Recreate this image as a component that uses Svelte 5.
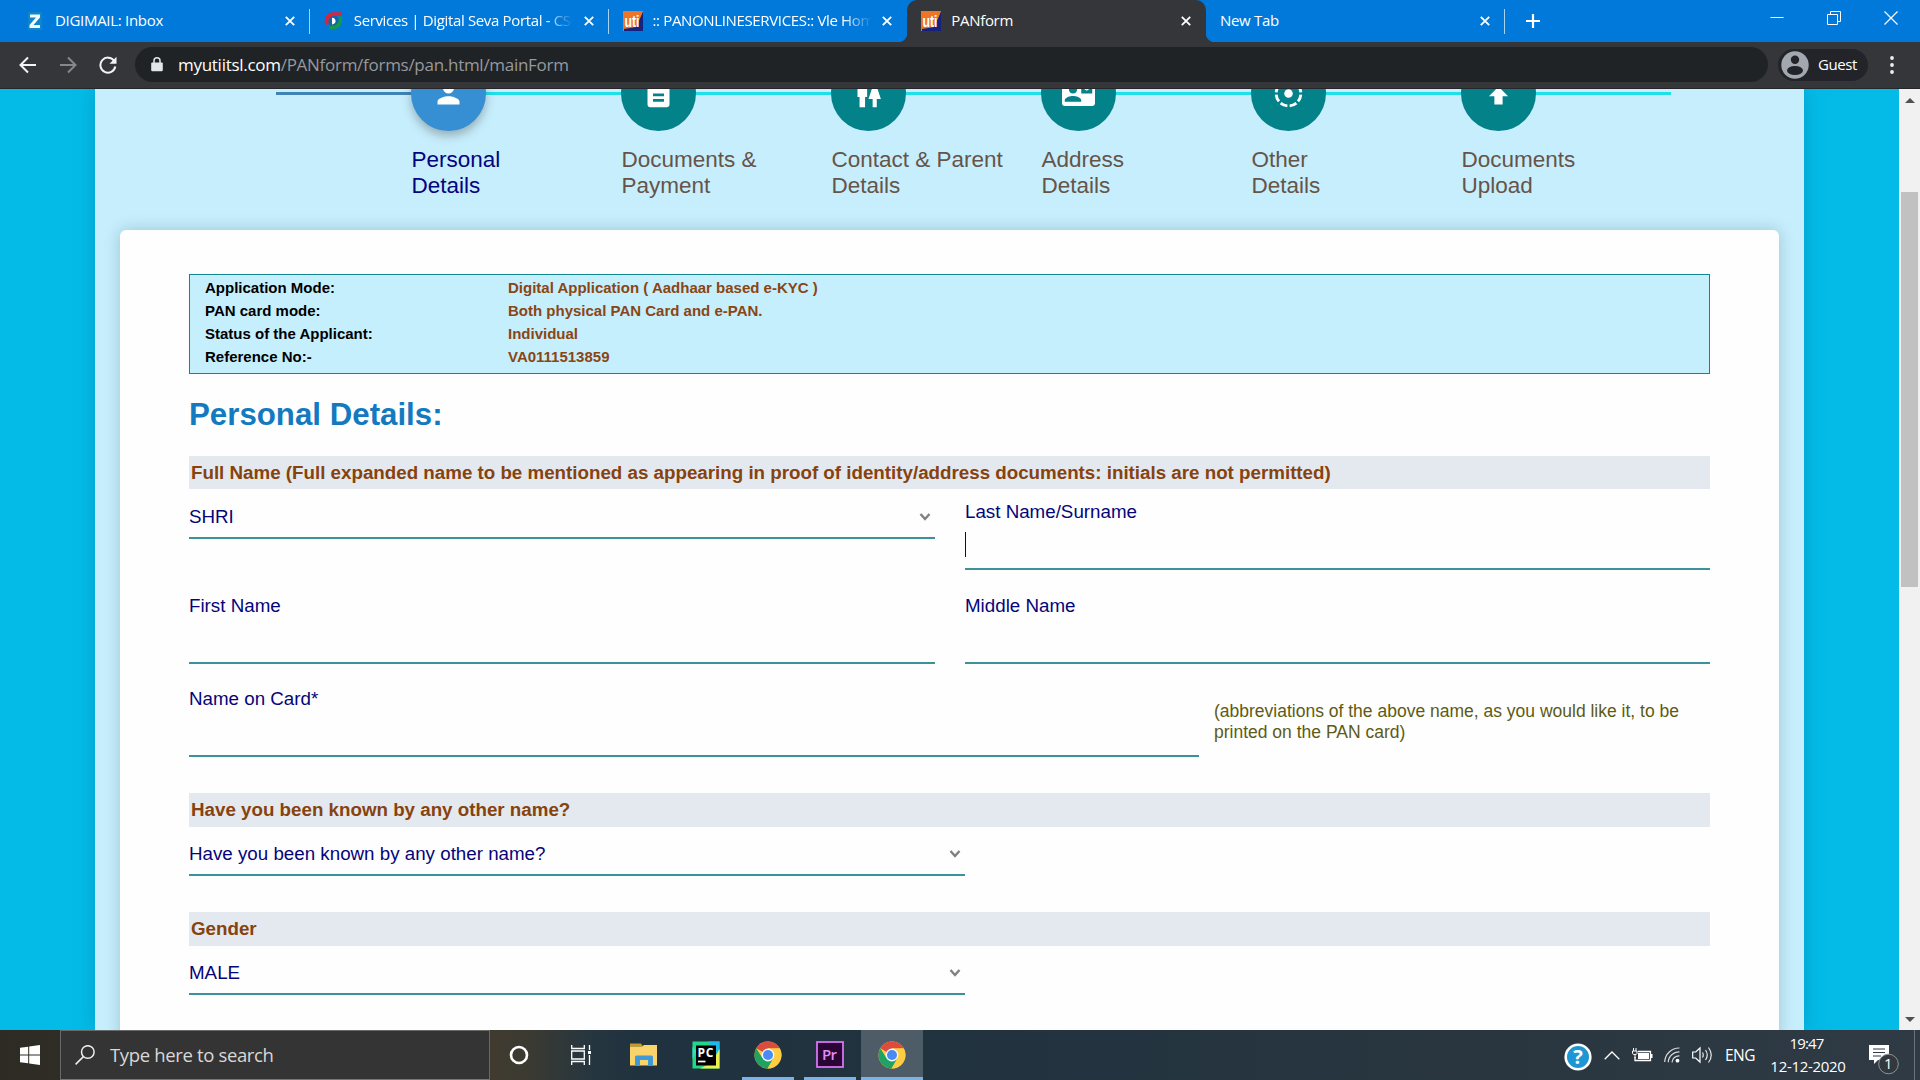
<script>
  const tabs = [
    { title: 'DIGIMAIL: Inbox', icon: 'z' },
    { title: 'Services | Digital Seva Portal - CSC', icon: 'd', fade: true, tight: true },
    { title: ':: PANONLINESERVICES:: Vle Home', icon: 'uti', fade: true, tight: true },
    { title: 'PANform', icon: 'uti', active: true },
    { title: 'New Tab', icon: null }
  ];
  const steps = [
    { lines: ['Personal', 'Details'], icon: 'person', active: true },
    { lines: ['Documents &', 'Payment'], icon: 'doc' },
    { lines: ['Contact & Parent', 'Details'], icon: 'wc' },
    { lines: ['Address', 'Details'], icon: 'mail' },
    { lines: ['Other', 'Details'], icon: 'ring' },
    { lines: ['Documents', 'Upload'], icon: 'publish' }
  ];
  const info = [
    ['Application Mode:', 'Digital Application ( Aadhaar based e-KYC )'],
    ['PAN card mode:', 'Both physical PAN Card and e-PAN.'],
    ['Status of the Applicant:', 'Individual'],
    ['Reference No:-', 'VA0111513859']
  ];
</script>

{#snippet chevron()}
  <svg class="chev" width="12" height="9" viewBox="0 0 12 9"><path d="M1.5 1 6 6l4.500-5" fill="none" stroke="#808080" stroke-width="2.400" /></svg>
{/snippet}

{#snippet select(text)}
  <div class="select"><span>{text}</span>{@render chevron()}</div>
{/snippet}

{#snippet chrome()}
  <svg width="28" height="28" viewBox="0 0 28 28">
    <circle cx="14" cy="14" r="13.500" fill="#ffcd41" />
    <path d="M14 14 2.300 7.250A13.500 13.500 0 0 1 25.700 7.250H14z" fill="#dd4b3e" />
    <path d="M2.300 7.250A13.500 13.500 0 0 0 13.600 27.500L19.500 17.200 14 14 8.500 17.200z" fill="#1ea362" />
    <path d="M14 7.700H25.900A13.500 13.500 0 0 1 13.600 27.500L19.500 17.200z" fill="#ffcd41" />
    <circle cx="14" cy="14" r="6.400" fill="#f4f6f7" />
    <circle cx="14" cy="14" r="5" fill="#4a8af4" />
  </svg>
{/snippet}

<div class="screen">
  <header class="tabstrip">
    {#each tabs as t, i}
      <div class="tab" class:active={t.active} class:sep={i !== 2 && !t.active}>
        {#if t.icon}
          <span class="fav">
            {#if t.icon === 'z'}
              <svg width="20" height="20" viewBox="0 0 20 20"><rect x="3" y="1" width="14" height="18" fill="#0f86c9" /><path d="M5 3.500h10v3L8.500 14H15v3H4.500v-3L11 6.500H5z" fill="#f2f8fb" /></svg>
            {:else if t.icon === 'd'}
              <svg width="20" height="20" viewBox="0 0 20 20"><circle cx="9.500" cy="10" r="5.500" fill="#1763a8" /><path d="M3.200 13.500C1 7 5 3 10 3.200h7" fill="none" stroke="#d3263f" stroke-width="3.800" /><path d="M16.300 5.500C17.500 13 13 17.500 5.500 16.500" fill="none" stroke="#159a4c" stroke-width="3.600" /><path d="M8 6.800c4.800.2 4.800 6.400 0 6.600z" fill="#fff" /></svg>
            {:else}
              <svg width="20" height="20" viewBox="0 0 20 20"><path d="M0 0h20L14 20H0z" fill="#ee7526" /><path d="M20 1v19H1v-2l12-2z" fill="#17227c" /><text x="1.500" y="15.500" class="uti" textLength="15" lengthAdjust="spacingAndGlyphs">uti</text></svg>
            {/if}
          </span>
        {/if}
        <span class="title" class:fade={t.fade} class:tight={t.tight}>{t.title}</span>
        <svg class="x" width="10" height="10" viewBox="0 0 10 10"><path d="M.8.8l8.400 8.400M9.200.8.8 9.200" stroke="#fff" stroke-width="1.800" /></svg>
      </div>
    {/each}
    <svg class="plus" width="16" height="16" viewBox="0 0 16 16"><path d="M8 1v14M1 8h14" stroke="#fff" stroke-width="2.200" /></svg>
    <div class="winctl">
      <svg width="14" height="14" viewBox="0 0 14 14"><path d="M0.500 6.500h13" stroke="#fff" /></svg>
      <svg width="14" height="14" viewBox="0 0 14 14"><path d="M.5 3.500h10v10H.5zM3.500 3V.5h10v10H11" fill="none" stroke="#fff" /></svg>
      <svg width="14" height="14" viewBox="0 0 14 14"><path d="M.5.5l13 13M13.500.5l-13 13" stroke="#fff" stroke-width="1.200" /></svg>
    </div>
  </header>

  <div class="toolbar">
    <svg class="nav" width="18" height="18" viewBox="0 0 18 18"><path d="M17 9H2M9 1.500 1.500 9 9 16.500" fill="none" stroke="#f1f3f4" stroke-width="2" /></svg>
    <svg class="nav" width="18" height="18" viewBox="0 0 18 18"><path d="M1 9h15M9 1.500 16.500 9 9 16.500" fill="none" stroke="#85878a" stroke-width="2" /></svg>
    <svg class="nav" width="18" height="18" viewBox="0 0 18 18"><path d="M15.200 5A7.500 7.500 0 1 0 16.300 10.500" fill="none" stroke="#f1f3f4" stroke-width="2" /><path d="M17.500.8v7h-7z" fill="#f1f3f4" /></svg>
    <div class="omni">
      <svg width="12" height="15" viewBox="0 0 12 15"><path d="M1.200 5.500h9.600q1 0 1 1V13q0 1.200-1.200 1.200H1.400Q.2 14.200.2 13V6.500q0-1 1-1z" fill="#e3e5e8" /><path d="M3 6V3.800a3 3 0 0 1 6 0V6" fill="none" stroke="#e3e5e8" stroke-width="1.500" /></svg>
      <span class="url"><b>myutiitsl.com</b>/PANform/forms/pan.html/mainForm</span>
    </div>
    <div class="guest">
      <svg width="28" height="28" viewBox="0 0 28 28"><circle cx="14" cy="14" r="13.700" fill="#a3a7b0" /><circle cx="14" cy="8.800" r="4.200" fill="#222429" /><ellipse cx="14" cy="19.500" rx="8" ry="4.600" fill="#222429" /></svg>
      <span>Guest</span>
    </div>
    <svg class="dots" width="4" height="18" viewBox="0 0 4 18"><g fill="#eee"><circle cx="2" cy="2" r="1.900" /><circle cx="2" cy="9" r="1.900" /><circle cx="2" cy="16" r="1.900" /></g></svg>
  </div>

  <div class="view">
    <main class="page">
      <div class="container">
        <div class="wizard">
          <div class="track"></div>
          {#each steps as s}
            <div class="step" class:active={s.active}>
              <div class="circle">
                <svg width="33" height="33" viewBox="0 0 24 24" fill="#fff">
                  {#if s.icon === 'person'}
                    <path d="M12 12c2.210 0 4-1.790 4-4s-1.790-4-4-4-4 1.790-4 4 1.790 4 4 4zm0 2c-2.670 0-8 1.340-8 4v2h16v-2c0-2.660-5.330-4-8-4z" />
                  {:else if s.icon === 'doc'}
                    <path d="M14 2H6c-1.100 0-2 .9-2 2v16c0 1.100.9 2 2 2h12c1.100 0 2-.9 2-2V8l-6-6zm2 16H8v-2h8v2zm0-4H8v-2h8v2z" />
                  {:else if s.icon === 'wc'}
                    <path d="M5.500 22v-7.500H4V9c0-1.100.9-2 2-2h3c1.100 0 2 .9 2 2v5.500H9.500V22h-4zM18 22v-6h3l-2.540-7.630C18.180 7.550 17.420 7 16.560 7h-.12c-.86 0-1.630.55-1.900 1.370L12 16h3v6h3z" />
                  {:else if s.icon === 'mail'}
                    <path fill-rule="evenodd" d="M22 3H2C.9 3 0 3.900 0 5v14c0 1.100.9 2 2 2h20c1.100 0 2-.9 2-2V5c0-1.100-.9-2-2-2zM8 6c1.660 0 3 1.340 3 3s-1.340 3-3 3-3-1.340-3-3 1.340-3 3-3zm6 12H2v-1c0-2 4-3.100 6-3.100s6 1.100 6 3.100v1zm8-6h-8V6h8v6zm-1-4l-3 2-3-2V7l3 2 3-2v1z" />
                  {:else if s.icon === 'ring'}
                    <circle cx="12" cy="12" r="3.100" />
                    <circle cx="12" cy="12" r="9" fill="none" stroke="#fff" stroke-width="2.100" pathLength="80" stroke-dasharray="7.600 2.400" stroke-dashoffset="-1.200" />
                  {:else}
                    <path d="M5 4v2h14V4H5zm0 10h4v6h6v-6h4l-7-7-7 7z" />
                  {/if}
                </svg>
              </div>
              <p>{s.lines[0]}<br />{s.lines[1]}</p>
            </div>
          {/each}
        </div>

        <section class="card">
          <div class="info">
            {#each info as [k, v]}
              <div class="irow"><span class="k">{k}</span><span class="v">{v}</span></div>
            {/each}
          </div>
          <h2>Personal Details:</h2>
          <div class="bar first">Full Name (Full expanded name to be mentioned as appearing in proof of identity/address documents: initials are not permitted)</div>
          <div class="two r1">
            <div class="tall">{@render select('SHRI')}</div>
            <div class="field"><span class="label">Last Name/Surname</span><span class="caret"></span></div>
          </div>
          <div class="two r2">
            <div class="field">First Name</div>
            <div class="field">Middle Name</div>
          </div>
          <div class="cardname">
            <div class="field">Name on Card*</div>
            <p>(abbreviations of the above name, as you would like it, to be printed on the PAN card)</p>
          </div>
          <div class="bar">Have you been known by any other name?</div>
          <div class="half">{@render select('Have you been known by any other name?')}</div>
          <div class="bar">Gender</div>
          <div class="half">{@render select('MALE')}</div>
        </section>
      </div>
    </main>
    <aside class="scroll">
      <svg width="10" height="5" viewBox="0 0 10 5"><path d="M5 0l5 5H0z" fill="#505050" /></svg>
      <div class="thumb"></div>
      <svg width="10" height="5" viewBox="0 0 10 5"><path d="M0 0h10L5 5z" fill="#505050" /></svg>
    </aside>
  </div>

  <footer class="taskbar">
    <div class="start"><svg width="20" height="20" viewBox="0 0 20 20"><path d="M0 2.800 8.200 1.700v7.800H0zM9.200 1.500 20 0v9.500H9.200zM0 10.500h8.200v7.800L0 17.200zM9.200 10.500H20V20L9.200 18.500z" fill="#fff" /></svg></div>
    <div class="search">
      <svg width="20" height="20" viewBox="0 0 20 20"><circle cx="12.800" cy="7" r="6.300" fill="none" stroke="#eee" stroke-width="1.500" /><path d="M8.400 11.600.6 19.400" stroke="#eee" stroke-width="1.500" /></svg>
      <span>Type here to search</span>
    </div>
    <div class="app early"><svg width="20" height="20" viewBox="0 0 20 20"><circle cx="10" cy="10" r="8" fill="none" stroke="#fff" stroke-width="2.600" /></svg></div>
    <div class="app early"><svg width="21" height="20" viewBox="0 0 21 20"><path d="M.7 0v3.500h12.600V0M.7 20v-3.500h12.600V20M.7 6h12.600v8H.7zM18.500 0v5M18.500 10v10" fill="none" stroke="#fff" stroke-width="1.300" /><rect x="17" y="6" width="3" height="3" fill="#fff" /></svg></div>
    <div class="app"><svg width="28" height="24" viewBox="0 0 28 24"><path d="M0 .5h11l2 3H0z" fill="#c99a1b" /><path d="M0 3.500h12l2-1.500h13v20.500H0z" fill="#fbd36b" /><path d="M5 23V14q0-1.500 1.500-1.500h15Q23 12.500 23 14v9h-5v-6h-8v6z" fill="#3f9ad6" /></svg></div>
    <div class="app"><svg width="28" height="28" viewBox="0 0 28 28"><path d="M.5.5h27v27H.5z" fill="#21d789" /><path d="M16 .5h11.500V16L22 10z" fill="#1fb8e8" /><path d="M27.500 8v19.500H8l12-6z" fill="#eef04e" /><path d="M.5 6v12L5 10z" fill="#35e0b5" /><rect x="4" y="4.500" width="20" height="20" fill="#000" /><text x="5.500" y="15.500" class="pc" textLength="16">PC</text><path d="M6 20.500h7.500" stroke="#fff" stroke-width="1.700" /></svg></div>
    <div class="app open">{@render chrome()}</div>
    <div class="app open"><svg class="prsvg" width="28" height="28" viewBox="0 0 28 28"><rect x="1" y="1" width="26" height="25" fill="#2a0634" stroke="#d673f2" stroke-width="1.800" /><text x="6" y="18.500" class="pr" textLength="15">Pr</text></svg></div>
    <div class="app open current">{@render chrome()}</div>
    <div class="tray">
      <svg class="help" width="28" height="28" viewBox="0 0 28 28"><circle cx="14" cy="14" r="12.300" fill="#1e96d4" stroke="#fff" stroke-width="2.600" /><text x="14" y="21" text-anchor="middle" class="q">?</text></svg>
      <svg class="up" width="16" height="9" viewBox="0 0 16 9"><path d="M.7 8.300 8 1l7.300 7.300" fill="none" stroke="#fff" stroke-width="1.300" /></svg>
      <svg class="bat" width="21" height="14" viewBox="0 0 21 14"><path d="M6 3.500h12.500v9H3V9" fill="none" stroke="#fff" stroke-width="1.300" /><rect x="6" y="5" width="11" height="6" fill="#fff" /><rect x="19" y="6" width="1.500" height="4" fill="#fff" /><path d="M1.500 0v3M4 0v3M.5 3h4.500v2.500q0 1-2.200 1T.5 5.500zM3 6v4" fill="none" stroke="#fff" /></svg>
      <svg class="wifi" width="16" height="16" viewBox="0 0 16 16"><g fill="none" stroke="#d5dade" stroke-width="1.200"><path d="M.7 15A14.500 14.500 0 0 1 15.500 1" /><path d="M4.300 15.300A10.500 10.500 0 0 1 15.500 5" /><path d="M8 15.500A7 7 0 0 1 15.500 8.800" /></g><circle cx="13.500" cy="13.700" r="1.900" fill="#fff" /></svg>
      <svg class="snd" width="21" height="18" viewBox="0 0 21 18"><path d="M.7 6h3L8 2v14l-4.300-4h-3z" fill="none" stroke="#fff" stroke-width="1.200" /><path d="M10.500 6.500q1.500 2.500 0 5M13.500 4q3.500 5 0 10M16.500 1.500q5.500 7.500 0 15" fill="none" stroke="#e5e8ea" stroke-width="1.200" /></svg>
      <span class="lang">ENG</span>
      <div class="clock"><span class="time">19:47</span><span>12-12-2020</span></div>
      <svg class="note" width="32" height="32" viewBox="0 0 32 32"><path d="M0 1h20v15H9l-4 4v-4H0z" fill="#fff" /><path d="M4 5h12M4 8.500h12M4 12h8" stroke="#2f3b46" stroke-width="1.200" /><circle cx="19.500" cy="20" r="9.800" fill="#33383d" stroke="#8d9397" /><text x="19.300" y="25" text-anchor="middle" class="one">1</text></svg>
      <i class="peek"></i>
    </div>
  </footer>
</div>

<style>
  :global(body) { margin: 0; overflow: hidden; }
  .screen, .screen * { box-sizing: border-box; }
  .screen { width: 1920px; height: 1080px; display: flex; flex-direction: column; overflow: hidden; font-family: "Liberation Sans", Arial, sans-serif; }
  svg { display: block; flex: none; }

  .tabstrip { height: 42px; flex: none; display: flex; background: #0079da; padding-left: 11px; color: #fff; font-family: "Open Sans", sans-serif; }
  .tab { width: 298.750px; flex: none; display: flex; align-items: center; padding: 0 15px 0 14px; position: relative; }
  .tab.sep::after { content: ''; position: absolute; right: 0; top: 9px; height: 25px; width: 1px; background: #a9d2f3; }
  .tab.active { background: #343639; border-radius: 10px 10px 0 0; }
  .tab.active::before, .tab.active::after { content: ''; position: absolute; bottom: 0; width: 9px; height: 9px; }
  .tab.active::before { left: -9px; background: radial-gradient(circle at 0 0, transparent 9px, #343639 9.500px); }
  .tab.active::after { right: -9px; background: radial-gradient(circle at 100% 0, transparent 9px, #343639 9.500px); }
  .fav { width: 30px; flex: none; margin-left: 0; }
  .uti { font: bold 16px "Liberation Sans", sans-serif; fill: #fff; }
  .title { flex: 1; font-size: 15px; line-height: 38px; padding-bottom: 2px; white-space: nowrap; overflow: hidden; letter-spacing: -0.300px; margin-right: 10px; }
  .title.tight { letter-spacing: -0.350px; }
  .title.fade { -webkit-mask-image: linear-gradient(90deg, #000 190px, transparent 219px); mask-image: linear-gradient(90deg, #000 190px, transparent 219px); }
  .plus { margin: 13px 0 0 20px; }
  .winctl { margin-left: auto; margin-right: 22px; margin-top: 11px; display: flex; gap: 43px; }

  .toolbar { height: 47px; flex: none; display: flex; align-items: center; background: #343639; border-bottom: 1px solid #24262a; padding: 0 0 1px 19px; font-family: "Open Sans", sans-serif; }
  .nav { margin-right: 22px; }
  .omni { width: 1633px; height: 35px; border-radius: 18px; background: #202326; display: flex; align-items: center; padding-left: 16px; gap: 15px; margin-left: -4px; }
  .url { font-size: 17px; letter-spacing: -0.280px; color: #96999d; line-height: 30px; white-space: nowrap; }
  .url b { font-weight: 400; color: #fff; }
  .guest { margin-left: 10px; width: 90px; height: 32px; border-radius: 16px; background: #222429; color: #fff; display: flex; align-items: center; padding-left: 3px; gap: 9px; font-size: 15px; letter-spacing: -0.400px; }
  .guest span { padding-bottom: 2px; }
  .dots { margin-left: 22px; }

  .view { height: 941px; flex: none; display: flex; overflow: hidden; }
  .page { flex: 1; background: #04bbe8; display: flex; justify-content: center; overflow: hidden; }
  .container { width: 1709px; height: 941px; background: #c7eefd; box-shadow: 0 0 20px rgba(0, 90, 120, .28); padding: 0 25px; }
  .wizard { height: 141px; position: relative; display: flex; padding-left: 291px; }
  .track { position: absolute; left: 156px; top: 3px; width: 1395px; height: 3px; background: linear-gradient(90deg, #3f83b5 0 150px, #1fdfe9 150px); }
  .step { width: 210px; flex: none; position: relative; margin-top: -33px; }
  .circle { width: 75px; height: 75px; border-radius: 50%; background: #03828a; display: flex; align-items: center; justify-content: center; }
  .active .circle { background: #368fd2; box-shadow: 0 5px 10px rgba(60, 60, 60, .35); }
  .step p { margin: 16px 0 0; padding-left: 0.500px; font-size: 22.500px; line-height: 26px; color: #665448; white-space: nowrap; }
  .step.active p { color: #04047e; }

  .card { height: 811px; background: #fefefe; border-radius: 6px 6px 0 0; box-shadow: 0 0 16px rgba(0, 50, 60, .22); padding: 44px 69px 0; }
  .info { height: 100px; border: 1px solid #12858f; background: #c5effd; padding: 1px 15px 0; font-weight: 700; font-size: 15px; line-height: 23px; }
  .irow { display: flex; }
  .k { width: 303px; color: #000; }
  .v { color: #8b4513; }
  h2 { margin: 0 0 1px; font-size: 31.250px; line-height: 81px; color: #147abf; }
  .bar { height: 34px; line-height: 34px; background: #e3e9ee; color: #87420e; font-weight: 700; font-size: 18.750px; padding-left: 2px; white-space: nowrap; }
  .bar.first { height: 33px; line-height: 33px; }
  .two { display: grid; grid-template-columns: 746px 745px; column-gap: 30px; height: 94px; color: #05057a; }
  .select { height: 49px; border-bottom: 2px solid #3c9298; display: flex; align-items: center; justify-content: space-between; padding: 7px 4px 0 0; color: #05057a; font-size: 18.750px; line-height: 36px; }
  .tall .select { height: 50px; padding-top: 8px; }
  .field { height: 81px; border-bottom: 2px solid #3c9298; padding-top: 12px; line-height: 22px; font-size: 18.750px; color: #05057a; }
  .label { display: block; }
  .caret { display: block; width: 1px; height: 25px; margin-top: 9px; background: #05057a; }
  .r2 { height: 93px; }
  .cardname { height: 117px; display: grid; grid-template-columns: 1010px 480px; column-gap: 15px; }
  .cardname p { margin: 25px 0 0; font-size: 17.500px; line-height: 21px; color: #5d5b14; }
  .half { width: 776px; height: 85px; }
  .scroll { width: 21px; background: #f1f1f1; display: flex; flex-direction: column; align-items: center; padding: 9px 0 8px; }
  .thumb { width: 17px; height: 395px; background: #c1c1c1; margin: 89px 0 auto; }

  .taskbar { height: 50px; flex: none; display: flex; align-items: stretch; color: #fff; background: linear-gradient(90deg, #2d2b24 0, #403b2f 490px, #3b3a32 530px, #26363f 590px, #20323f 640px, #22333f 1000px, #29363f 1500px, #2f3a45 1920px); }
  .start { width: 60px; display: flex; align-items: center; justify-content: center; }
  .search { width: 430px; background: #343434; border: 1px solid #696967; border-bottom-color: #777; display: flex; align-items: center; padding-left: 14px; gap: 15px; font-family: "Open Sans", sans-serif; font-size: 18.500px; letter-spacing: -0.350px; color: #d8d8d8; }
  .search span { padding-bottom: 2px; }
  .app { width: 61.800px; display: flex; align-items: center; justify-content: center; position: relative; flex: none; }
  .early { padding-right: 3px; }
  .open::after { content: ''; position: absolute; left: 5px; right: 5px; bottom: 0; height: 3px; background: #7ab4e6; }
  .current { background: #4d5c67; }
  .current::after { left: 0; right: 0; }
  .pc { font: bold 12px "Open Sans", sans-serif; fill: #fff; }
  .prsvg { margin-bottom: 1px; }
  .pr { font: 600 15px "Open Sans", sans-serif; fill: #e28bf5; }
  .q { font: bold 20px "Open Sans", sans-serif; fill: #fff; }
  .one { font: 15px "Open Sans", sans-serif; fill: #fff; }
  .tray { margin-left: auto; display: flex; align-items: center; }
  .help { margin-right: 12px; margin-top: 3px; }
  .up { margin-right: 12px; }
  .bat { margin-right: 11px; }
  .wifi { margin-right: 12px; }
  .snd { margin-right: 12px; }
  .lang { font: 15.500px "Open Sans", sans-serif; letter-spacing: -0.500px; width: 46px; }
  .clock { width: 76px; text-align: center; display: flex; flex-direction: column; font: 15px/23px "Open Sans", sans-serif; letter-spacing: -0.300px; white-space: nowrap; align-items: center; margin-top: -1px; margin-left: -1px; }
  .time { letter-spacing: -0.800px; padding-right: 3px; }
  .note { margin-left: 23px; margin-top: 10px; }
  .peek { width: 1px; height: 50px; background: #69727a; margin-left: 13px; margin-right: 5px; }
</style>
